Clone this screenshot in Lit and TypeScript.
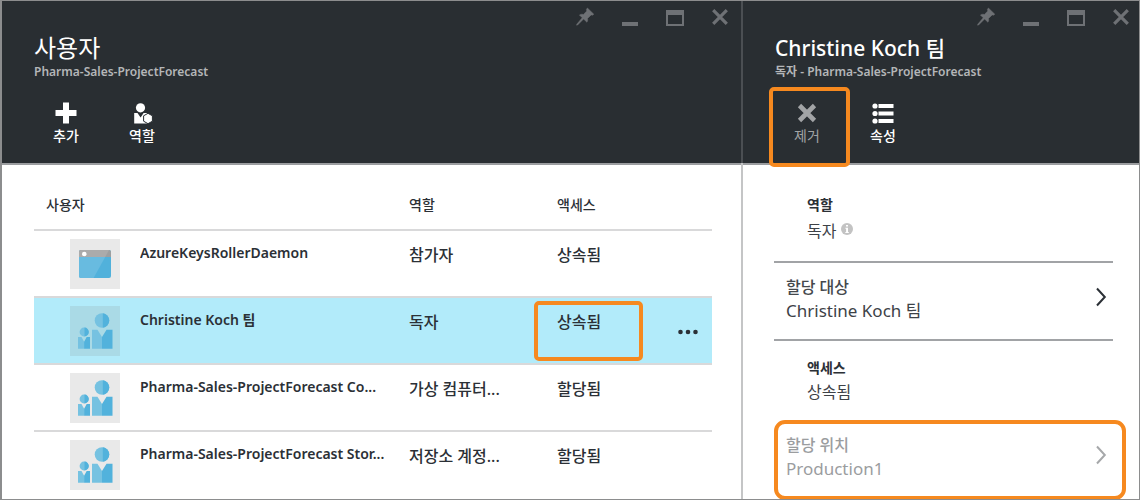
import { LitElement, html, svg, css, nothing } from "lit";
import { customElement, property } from "lit/decorators.js";

const pinIcon = svg`<svg viewBox="0 0 20 20" width="20" height="20" aria-hidden="true">
  <path d="M12.4 1 L18.8 7.2 L17.4 8.2 L16.2 7.9 L12.500 11.4 C12.9 13 12.6 14.2 11.9 15.2 L8.6 12 L2.6 18 L1.6 18.2 L1.8 17.2 L7.2 10.8 L4.4 8 C5.6 7.2 7 7 8.4 7.5 L11.8 4 L11.4 2.4 Z" fill="currentColor" stroke="currentColor" stroke-width=".5"/></svg>`;
const minIcon = svg`<svg viewBox="0 0 20 20" width="20" height="20" aria-hidden="true">
  <rect x="2" y="15" width="16" height="4" fill="currentColor"/></svg>`;
const maxIcon = svg`<svg viewBox="0 0 20 20" width="20" height="20" aria-hidden="true">
  <path d="M1 3h18v16H1zM3 8v9h14V8z" fill="currentColor" fill-rule="evenodd"/></svg>`;
const closeIcon = svg`<svg viewBox="0 0 20 20" width="20" height="20" aria-hidden="true">
  <path d="M3.2 3.2l13.6 13.6M16.8 3.2L3.2 16.8" stroke="currentColor" stroke-width="3.2" fill="none"/></svg>`;

const addIcon = svg`<svg viewBox="0 0 24 24" width="24" height="24" aria-hidden="true">
  <path d="M9 1.500h6v7.500h7.500v6H15v7.500H9V15H1.500V9H9z" fill="currentColor"/></svg>`;
const rolesIcon = svg`<svg viewBox="0 0 24 24" width="24" height="24" aria-hidden="true">
  <circle cx="10.500" cy="6.800" r="4.600" fill="currentColor"/>
  <path d="M4.200 12h3.300l3.100 4.500 3-4.500h3.600v10.500h-13z" fill="currentColor"/>
  <path d="M18 12.300l4.400 2.500v5.400L18 22.700l-4.400-2.500v-5.400z" fill="currentColor" stroke="#292e32" stroke-width="1"/></svg>`;
const removeIcon = svg`<svg viewBox="0 0 24 24" width="24" height="24" aria-hidden="true">
  <path d="M4.500 4.500l15 15M19.500 4.500l-15 15" stroke="currentColor" stroke-width="4.600" fill="none"/></svg>`;
const listIcon = svg`<svg viewBox="0 0 24 24" width="24" height="24" aria-hidden="true">
  <g fill="currentColor"><circle cx="4" cy="5" r="2.600"/><circle cx="4" cy="12.500" r="2.600"/><circle cx="4" cy="20" r="2.600"/>
  <rect x="7.500" y="3" width="15" height="4"/><rect x="7.500" y="10.500" width="15" height="4"/><rect x="7.500" y="18" width="15" height="4"/></g></svg>`;

const appTile = svg`<svg viewBox="0 0 50 50" width="50" height="50" aria-hidden="true">
  <rect x="9" y="11" width="32" height="28" rx="2" fill="#51b1db"/>
  <path d="M9 18h26.200L23.600 39H11a2 2 0 0 1-2-2z" fill="#68bbe0"/>
  <path d="M9 18v-5a2 2 0 0 1 2-2h28a2 2 0 0 1 2 2v5z" fill="#9d9fa0"/>
  <path d="M9 18v-5a2 2 0 0 1 2-2h28l-3.800 7z" fill="#ababab"/>
  <circle cx="14.300" cy="15" r="2.300" fill="#fff"/></svg>`;
const groupTile = svg`<svg viewBox="0 0 50 50" width="50" height="50" aria-hidden="true">
  <circle cx="32" cy="14.500" r="7.300" fill="#76c2e1"/>
  <path d="M32.800 7.250a7.300 7.300 0 0 1 0 14.500z" fill="#52b2dc"/>
  <path d="M22 23.700h5.500L32 31v11.700H22z" fill="#76c2e1"/>
  <path d="M42.500 23.700H36.500L32 31v11.700h10.500z" fill="#52b2dc"/>
  <circle cx="14" cy="26" r="4.400" fill="#76c2e1"/>
  <path d="M14.500 21.600a4.400 4.400 0 0 1 0 8.800z" fill="#52b2dc"/>
  <path d="M8 31h3.500l2.600 4.700v7H8z" fill="#76c2e1"/>
  <path d="M20 31h-3.300l-2.600 4.700v7H20z" fill="#52b2dc"/></svg>`;

const chevronIcon = svg`<svg viewBox="0 0 12 20" width="12" height="20" aria-hidden="true">
  <path d="M2 1.500L9.800 10 2 18.500" stroke="currentColor" stroke-width="2" fill="none"/></svg>`;
const infoIcon = svg`<svg viewBox="0 0 12 12" width="12" height="12" aria-hidden="true">
  <circle cx="6" cy="6" r="6" fill="#c3c3c3"/><path d="M5 2h2v1.600H5zM4.400 4.800H7V9h.8v1H4.300V9h.8V5.700h-.7z" fill="#fff"/></svg>`;
const moreIcon = svg`<svg viewBox="0 0 22 6" width="22" height="6" aria-hidden="true">
  <g fill="#2b3036"><circle cx="3.500" cy="3" r="2.300"/><circle cx="11" cy="3" r="2.300"/><circle cx="18.500" cy="3" r="2.300"/></g></svg>`;

const base = css`
  * { box-sizing: border-box; }
  button {
    margin: 0; padding: 0; border: 0; background: none; color: inherit;
    font: inherit; text-align: inherit; cursor: pointer;
  }
  svg { display: block; }
`;

@customElement("blade-header")
class BladeHeader extends LitElement {
  @property() heading = "";
  @property() subheading = "";
  @property({ type: Boolean, reflect: true }) large = false;

  static styles = [base, css`
    :host {
      display: block; box-sizing: border-box; height: 165px; padding: 7px 9px 0 32px;
      background: #292e32; border-bottom: 2px solid #9b9da0; color: #fff;
    }
    :host([large]) { padding-left: 34px; padding-right: 11px; }
    .controls { display: flex; justify-content: flex-end; gap: 25px; color: #6e7175; height: 27px; }
    .controls button { height: 20px; }
    .title { margin: 0; font-size: 21px; line-height: 28px; font-weight: 500; white-space: nowrap; }
    .large { font-size: 24px; font-weight: 400; }
    .sub { margin: 0; font-size: 12px; line-height: 20px; font-weight: 600; color: #b4b6b8; white-space: nowrap; }
    .tools { display: flex; padding-top: 19px; }
  `];

  render() {
    return html`
      <div class="controls">
        <button aria-label="고정">${pinIcon}</button>
        <button aria-label="최소화">${minIcon}</button>
        <button aria-label="최대화">${maxIcon}</button>
        <button aria-label="닫기">${closeIcon}</button>
      </div>
      <h1 class="title ${this.large ? "large" : ""}">${this.heading}</h1>
      <p class="sub">${this.subheading}</p>
      <div class="tools"><slot></slot></div>`;
  }
}

interface UserRow { name: string; role: string; access: string; app?: boolean; selected?: boolean; }

const rows: UserRow[] = [
  { name: "AzureKeysRollerDaemon", role: "참가자", access: "상속됨", app: true },
  { name: "Christine Koch 팀", role: "독자", access: "상속됨", selected: true },
  { name: "Pharma-Sales-ProjectForecast Co...", role: "가상 컴퓨터...", access: "할당됨" },
  { name: "Pharma-Sales-ProjectForecast Stor...", role: "저장소 계정...", access: "할당됨" },
];

@customElement("app-root")
class AppRoot extends LitElement {
  static styles = [base, css`
    :host {
      display: grid; grid-template-columns: 65% 35%; min-height: 100vh; box-sizing: border-box;
      position: relative; background: #fff; color: #2b3036;
      font-family: "Noto Sans", "Noto Sans CJK KR", sans-serif; font-size: 14px;
    }
    .frame { position: absolute; inset: 0; border: 1px solid #8c8d8e; border-left-width: 2px; pointer-events: none; }
    .detail { border-left: 2px solid #c4c5c6; }
    .divider { position: absolute; left: 65%; top: 0; width: 2px; height: 163px; background: #4b4f53; }

    .tool {
      position: relative; width: 76px; display: flex; flex-direction: column; align-items: center;
      color: #fff; font-size: 14px; line-height: 22px; font-weight: 500;
    }
    .tool.first { margin-left: -6px; }
    .tool.dim { color: #a2a4a6; font-weight: 400; }
    .mark { position: absolute; border: 4px solid #f6891f; border-radius: 5px; pointer-events: none; }
    .mark.on-tool { inset: -14px -5px -20px 0; }
    .mark.on-cell { inset: 3px 22px 2px -23px; }

    .list { padding: 26px 29px 0 34px; }
    table { width: 100%; table-layout: fixed; border-collapse: separate; border-spacing: 0; }
    th, td { padding: 0; text-align: left; border-bottom: 2px solid #d9d9da; white-space: nowrap; vertical-align: top; }
    th { height: 40px; line-height: 28px; font-size: 14px; font-weight: 500; }
    th:first-child { padding-left: 12px; }
    td { height: 67px; padding-top: 12px; font-size: 16px; line-height: 24px; font-weight: 500; position: relative; }
    td.user { padding: 8px 0 0 36px; }
    tbody tr:last-child td { border-bottom: 0; }
    .role { width: 148px; }
    .access { width: 108px; }
    .more { width: 47px; }
    td.more { padding-top: 31px; }
    .more button { display: block; margin-left: 12px; }
    .selected td { background: #b2ebfa; }
    .person { display: flex; gap: 20px; }
    .name { font-size: 14px; line-height: 28px; font-weight: 600; overflow: hidden; }
    .tile { background: #e9e9e9; flex: none; }
    .selected .tile { background: #aadae6; }

    .body { padding: 26px 27px 0 31px; }
    dl { margin: 0; padding-left: 33px; height: 79px; }
    dl.top { height: 70px; }
    dt { font-size: 14px; line-height: 24px; font-weight: 600; }
    dd { margin: 0; font-size: 16px; line-height: 24px; color: #3d4247; display: flex; gap: 5px; }
    .top dt { line-height: 28px; }
    .info { padding-top: 4px; }
    .link {
      width: 100%; display: flex; align-items: flex-start; justify-content: space-between;
      padding: 12px 6px 0 12px; border: 0 solid #a1a3a6; border-width: 2px 0; height: 80px;
    }
    .link svg { margin-top: 12px; }
    .link strong { display: block; font-size: 16px; line-height: 24px; font-weight: 500; color: #44484c; }
    .link span { display: block; font-size: 17px; line-height: 24px; color: #3d4247; }
    .link.off { position: relative; padding-top: 11px; border-color: transparent; color: #a6a8aa; }
    .link.off strong, .link.off span { color: #9b9d9f; }
    .mark.on-link { inset: -2px -13px -2px 0; border-radius: 11px; }
    .access-info { padding-top: 15px; }
  `];

  render() {
    return html`
      <section>
        <blade-header large heading="사용자" subheading="Pharma-Sales-ProjectForecast">
          <button class="tool first">${addIcon}<span>추가</span></button>
          <button class="tool">${rolesIcon}<span>역할</span></button>
        </blade-header>
        <div class="list">
          <table>
            <thead><tr>
              <th>사용자</th><th class="role">역할</th><th class="access">액세스</th><th class="more"></th>
            </tr></thead>
            <tbody>${rows.map((r) => html`
              <tr class=${r.selected ? "selected" : ""}>
                <td class="user"><div class="person">
                  <div class="tile">${r.app ? appTile : groupTile}</div><div class="name">${r.name}</div>
                </div></td>
                <td>${r.role}</td>
                <td>${r.access}${r.selected ? html`<i class="mark on-cell"></i>` : nothing}</td>
                <td class="more">${r.selected ? html`<button aria-label="더 보기">${moreIcon}</button>` : nothing}</td>
              </tr>`)}
            </tbody>
          </table>
        </div>
      </section>
      <section class="detail">
        <blade-header heading="Christine Koch 팀" subheading="독자 - Pharma-Sales-ProjectForecast">
          <button class="tool dim first">${removeIcon}<span>제거</span><i class="mark on-tool"></i></button>
          <button class="tool">${listIcon}<span>속성</span></button>
        </blade-header>
        <div class="body">
          <dl class="top"><dt>역할</dt><dd>독자 <span class="info">${infoIcon}</span></dd></dl>
          <button class="link"><span><strong>할당 대상</strong><span>Christine Koch 팀</span></span>${chevronIcon}</button>
          <dl class="access-info"><dt>액세스</dt><dd>상속됨</dd></dl>
          <button class="link off"><span><strong>할당 위치</strong><span>Production1</span></span>${chevronIcon}<i class="mark on-link"></i></button>
        </div>
      </section>
      <div class="divider"></div>
      <div class="frame"></div>`;
  }
}
